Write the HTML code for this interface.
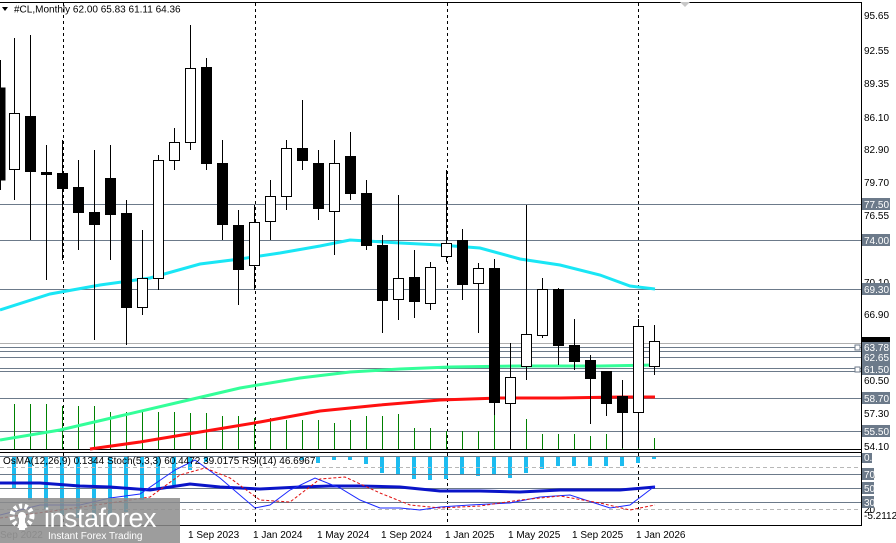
<!DOCTYPE html>
<html><head><meta charset="utf-8"><style>
html,body{margin:0;padding:0;background:#fff;width:896px;height:543px;overflow:hidden}
svg{display:block;font-family:"Liberation Sans",sans-serif}
</style></head><body>
<svg width="896" height="543" viewBox="0 0 896 543" xmlns="http://www.w3.org/2000/svg">
<rect width="896" height="543" fill="#fff"/>
<line x1="0" y1="2.5" x2="861" y2="2.5" stroke="#000"/>
<line x1="861.5" y1="2" x2="861.5" y2="526" stroke="#000"/>
<line x1="0" y1="449.5" x2="861" y2="449.5" stroke="#000"/>
<line x1="0" y1="452.5" x2="861" y2="452.5" stroke="#000"/>
<line x1="0" y1="525.5" x2="861" y2="525.5" stroke="#000"/>
<polygon points="680,2 690,2 685,7" fill="#c8c8c8"/>
<g stroke="#000" stroke-dasharray="3,3">
<line x1="63.5" y1="3" x2="63.5" y2="525"/>
<line x1="255.5" y1="3" x2="255.5" y2="525"/>
<line x1="447.5" y1="3" x2="447.5" y2="525"/>
<line x1="638.5" y1="3" x2="638.5" y2="525"/>
</g>
<g stroke="#6c7a8a">
<line x1="0" y1="204.5" x2="861" y2="204.5"/>
<line x1="0" y1="240.5" x2="861" y2="240.5"/>
<line x1="0" y1="289.5" x2="861" y2="289.5"/>
<line x1="0" y1="347.5" x2="861" y2="347.5"/>
<line x1="0" y1="351.5" x2="861" y2="351.5"/>
<line x1="0" y1="357.5" x2="861" y2="357.5"/>
<line x1="0" y1="368.5" x2="861" y2="368.5"/>
<line x1="0" y1="371.5" x2="861" y2="371.5"/>
<line x1="0" y1="398.5" x2="861" y2="398.5"/>
<line x1="0" y1="431.5" x2="861" y2="431.5"/>
</g>
<line x1="0" y1="343.5" x2="861" y2="343.5" stroke="#b0b0b0"/>
<rect x="855" y="345" width="5" height="5" fill="#fff" stroke="#6c7a8a"/>
<rect x="855" y="367" width="5" height="5" fill="#fff" stroke="#6c7a8a"/>
<g stroke="#008000">
<line x1="14.5" y1="404" x2="14.5" y2="449"/><line x1="30.5" y1="404" x2="30.5" y2="449"/><line x1="46.5" y1="404" x2="46.5" y2="449"/><line x1="62.5" y1="406" x2="62.5" y2="449"/><line x1="78.5" y1="406" x2="78.5" y2="449"/><line x1="94.5" y1="406" x2="94.5" y2="449"/><line x1="110.5" y1="412" x2="110.5" y2="449"/><line x1="126.5" y1="412" x2="126.5" y2="449"/><line x1="142.5" y1="412" x2="142.5" y2="449"/><line x1="158.5" y1="412" x2="158.5" y2="449"/><line x1="174.5" y1="412" x2="174.5" y2="449"/><line x1="190.5" y1="413" x2="190.5" y2="449"/><line x1="206.5" y1="413" x2="206.5" y2="449"/><line x1="222.5" y1="416" x2="222.5" y2="449"/><line x1="238.5" y1="416" x2="238.5" y2="449"/><line x1="254.5" y1="418" x2="254.5" y2="449"/><line x1="270.5" y1="418" x2="270.5" y2="449"/><line x1="286.5" y1="420" x2="286.5" y2="449"/><line x1="302.5" y1="420" x2="302.5" y2="449"/><line x1="318.5" y1="420" x2="318.5" y2="449"/><line x1="334.5" y1="423" x2="334.5" y2="449"/><line x1="350.5" y1="420" x2="350.5" y2="449"/><line x1="366.5" y1="416" x2="366.5" y2="449"/><line x1="382.5" y1="416" x2="382.5" y2="449"/><line x1="398.5" y1="414" x2="398.5" y2="449"/><line x1="414.5" y1="428" x2="414.5" y2="449"/><line x1="430.5" y1="428" x2="430.5" y2="449"/><line x1="446.5" y1="431" x2="446.5" y2="449"/><line x1="462.5" y1="431" x2="462.5" y2="449"/><line x1="478.5" y1="431" x2="478.5" y2="449"/><line x1="494.5" y1="415" x2="494.5" y2="449"/><line x1="510.5" y1="428" x2="510.5" y2="449"/><line x1="526.5" y1="419" x2="526.5" y2="449"/><line x1="542.5" y1="434" x2="542.5" y2="449"/><line x1="558.5" y1="434" x2="558.5" y2="449"/><line x1="574.5" y1="434" x2="574.5" y2="449"/><line x1="590.5" y1="436" x2="590.5" y2="449"/><line x1="606.5" y1="434" x2="606.5" y2="449"/><line x1="622.5" y1="437" x2="622.5" y2="449"/><line x1="638.5" y1="428" x2="638.5" y2="449"/><line x1="654.5" y1="438" x2="654.5" y2="449"/>
</g>
<polyline fill="none" stroke="#33ff99" stroke-width="3" points="0,440 60,430 120,416 180,402 240,388 300,378 350,372 400,369 450,367 520,366 600,366 655,365"/>
<polyline fill="none" stroke="#ff1010" stroke-width="3" points="90,449 140,442 200,432 260,422 320,411 380,405 440,400 500,398 560,398 620,397 655,397"/>
<polyline fill="none" stroke="#19e6f5" stroke-width="3" points="0,310 50,294 100,285 150,278 200,264 240,259 280,253 320,246 350,240 400,243 440,245 480,248 520,259 560,265 600,275 630,286 655,289"/>
<g stroke="#000" stroke-width="1">
<line x1="0.5" y1="60" x2="0.5" y2="190"/><rect x="-5" y="88" width="10" height="92" fill="#000"/>
<line x1="14.5" y1="38" x2="14.5" y2="200"/><rect x="9.5" y="113.5" width="10" height="56" fill="#fff"/>
<line x1="30.5" y1="35" x2="30.5" y2="240"/><rect x="25.5" y="116.5" width="10" height="55" fill="#000"/>
<line x1="46.5" y1="145" x2="46.5" y2="280"/><rect x="41.5" y="172.5" width="10" height="2" fill="#000"/>
<line x1="62.5" y1="140" x2="62.5" y2="260"/><rect x="57.5" y="173.5" width="10" height="15" fill="#000"/>
<line x1="78.5" y1="160" x2="78.5" y2="250"/><rect x="73.5" y="187.5" width="10" height="25" fill="#000"/>
<line x1="94.5" y1="150" x2="94.5" y2="340"/><rect x="89.5" y="212.5" width="10" height="12" fill="#000"/>
<line x1="110.5" y1="145" x2="110.5" y2="260"/><rect x="105.5" y="178.5" width="10" height="36" fill="#000"/>
<line x1="126.5" y1="200" x2="126.5" y2="345"/><rect x="121.5" y="213.5" width="10" height="94" fill="#000"/>
<line x1="142.5" y1="230" x2="142.5" y2="315"/><rect x="137.5" y="278.5" width="10" height="29" fill="#fff"/>
<line x1="158.5" y1="155" x2="158.5" y2="290"/><rect x="153.5" y="160.5" width="10" height="118" fill="#fff"/>
<line x1="174.5" y1="128" x2="174.5" y2="170"/><rect x="169.5" y="142.5" width="10" height="18" fill="#fff"/>
<line x1="190.5" y1="25" x2="190.5" y2="150"/><rect x="185.5" y="68.5" width="10" height="74" fill="#fff"/>
<line x1="206.5" y1="58" x2="206.5" y2="170"/><rect x="201.5" y="67.5" width="10" height="96" fill="#000"/>
<line x1="222.5" y1="140" x2="222.5" y2="240"/><rect x="217.5" y="163.5" width="10" height="61" fill="#000"/>
<line x1="238.5" y1="210" x2="238.5" y2="305"/><rect x="233.5" y="225.5" width="10" height="44" fill="#000"/>
<line x1="254.5" y1="205" x2="254.5" y2="290"/><rect x="249.5" y="222.5" width="10" height="43" fill="#fff"/>
<line x1="270.5" y1="180" x2="270.5" y2="240"/><rect x="265.5" y="196.5" width="10" height="25" fill="#fff"/>
<line x1="286.5" y1="140" x2="286.5" y2="210"/><rect x="281.5" y="148.5" width="10" height="48" fill="#fff"/>
<line x1="302.5" y1="100" x2="302.5" y2="170"/><rect x="297.5" y="148.5" width="10" height="12" fill="#000"/>
<line x1="318.5" y1="150" x2="318.5" y2="220"/><rect x="313.5" y="163.5" width="10" height="45" fill="#000"/>
<line x1="334.5" y1="140" x2="334.5" y2="255"/><rect x="329.5" y="163.5" width="10" height="48" fill="#fff"/>
<line x1="350.5" y1="132" x2="350.5" y2="200"/><rect x="345.5" y="156.5" width="10" height="37" fill="#000"/>
<line x1="366.5" y1="180" x2="366.5" y2="250"/><rect x="361.5" y="193.5" width="10" height="52" fill="#000"/>
<line x1="382.5" y1="235" x2="382.5" y2="333"/><rect x="377.5" y="245.5" width="10" height="55" fill="#000"/>
<line x1="398.5" y1="195" x2="398.5" y2="320"/><rect x="393.5" y="278.5" width="10" height="21" fill="#fff"/>
<line x1="414.5" y1="250" x2="414.5" y2="318"/><rect x="409.5" y="277.5" width="10" height="24" fill="#000"/>
<line x1="430.5" y1="262" x2="430.5" y2="310"/><rect x="425.5" y="267.5" width="10" height="36" fill="#fff"/>
<line x1="446.5" y1="170" x2="446.5" y2="262"/><rect x="441.5" y="243.5" width="10" height="13" fill="#fff"/>
<line x1="462.5" y1="229" x2="462.5" y2="300"/><rect x="457.5" y="240.5" width="10" height="44" fill="#000"/>
<line x1="478.5" y1="263" x2="478.5" y2="333"/><rect x="473.5" y="268.5" width="10" height="15" fill="#fff"/>
<line x1="494.5" y1="259" x2="494.5" y2="415"/><rect x="489.5" y="268.5" width="10" height="134" fill="#000"/>
<line x1="510.5" y1="343" x2="510.5" y2="450"/><rect x="505.5" y="377.5" width="10" height="26" fill="#fff"/>
<line x1="526.5" y1="205" x2="526.5" y2="380"/><rect x="521.5" y="334.5" width="10" height="32" fill="#fff"/>
<line x1="542.5" y1="278" x2="542.5" y2="338"/><rect x="537.5" y="289.5" width="10" height="46" fill="#fff"/>
<line x1="558.5" y1="288" x2="558.5" y2="365"/><rect x="553.5" y="289.5" width="10" height="56" fill="#000"/>
<line x1="574.5" y1="319" x2="574.5" y2="370"/><rect x="569.5" y="345.5" width="10" height="16" fill="#000"/>
<line x1="590.5" y1="355" x2="590.5" y2="424"/><rect x="585.5" y="360.5" width="10" height="18" fill="#000"/>
<line x1="606.5" y1="371" x2="606.5" y2="416"/><rect x="601.5" y="371.5" width="10" height="32" fill="#000"/>
<line x1="622.5" y1="380" x2="622.5" y2="448"/><rect x="617.5" y="396.5" width="10" height="16" fill="#000"/>
<line x1="638.5" y1="319" x2="638.5" y2="448"/><rect x="633.5" y="326.5" width="10" height="86" fill="#fff"/>
<line x1="654.5" y1="325" x2="654.5" y2="375"/><rect x="649.5" y="341.5" width="10" height="25" fill="#fff"/>
</g>
<g stroke="#1cbcf0" stroke-width="4">
<line x1="14" y1="457" x2="14" y2="488"/><line x1="30" y1="457" x2="30" y2="500"/><line x1="46" y1="457" x2="46" y2="510"/><line x1="62" y1="457" x2="62" y2="515"/><line x1="78" y1="457" x2="78" y2="518"/><line x1="94" y1="457" x2="94" y2="520"/><line x1="110" y1="457" x2="110" y2="515"/><line x1="126" y1="457" x2="126" y2="512"/><line x1="142" y1="457" x2="142" y2="500"/><line x1="158" y1="457" x2="158" y2="490"/><line x1="174" y1="457" x2="174" y2="485"/><line x1="190" y1="457" x2="190" y2="470"/><line x1="206" y1="457" x2="206" y2="462"/><line x1="302" y1="457" x2="302" y2="460"/><line x1="318" y1="457" x2="318" y2="463"/><line x1="334" y1="457" x2="334" y2="460"/><line x1="350" y1="457" x2="350" y2="460"/><line x1="366" y1="457" x2="366" y2="464"/><line x1="382" y1="457" x2="382" y2="473"/><line x1="398" y1="457" x2="398" y2="475"/><line x1="414" y1="457" x2="414" y2="479"/><line x1="430" y1="457" x2="430" y2="480"/><line x1="446" y1="457" x2="446" y2="479"/><line x1="462" y1="457" x2="462" y2="475"/><line x1="478" y1="457" x2="478" y2="476"/><line x1="494" y1="457" x2="494" y2="475"/><line x1="510" y1="457" x2="510" y2="478"/><line x1="526" y1="457" x2="526" y2="473"/><line x1="542" y1="457" x2="542" y2="469"/><line x1="558" y1="457" x2="558" y2="466"/><line x1="574" y1="457" x2="574" y2="466"/><line x1="590" y1="457" x2="590" y2="466"/><line x1="606" y1="457" x2="606" y2="466"/><line x1="622" y1="457" x2="622" y2="466"/><line x1="638" y1="457" x2="638" y2="463"/><line x1="654" y1="457" x2="654" y2="459"/>
</g>
<g stroke="#6c7a8a"><line x1="0" y1="456.5" x2="861" y2="456.5"/><line x1="0" y1="474.5" x2="861" y2="474.5"/><line x1="0" y1="488.5" x2="861" y2="488.5"/><line x1="0" y1="502.5" x2="861" y2="502.5"/></g>
<g stroke="#b8b8b8" stroke-dasharray="4,3"><line x1="0" y1="467.5" x2="861" y2="467.5"/><line x1="0" y1="509.5" x2="861" y2="509.5"/></g>
<polyline fill="none" stroke="#0a14c8" stroke-width="3" points="0,483 40,483 80,486 110,487 150,490 170,487 190,484 220,487 260,489 300,487 330,486 360,486 400,487 440,491 480,491 520,492 560,490 620,490 655,487"/>
<polyline fill="none" stroke="#1a28ff" stroke-width="1" points="0,515 40,505 80,505 110,498 140,494 175,470 195,460 220,478 255,508 270,505 290,490 315,478 340,488 360,500 380,508 400,508 420,510 440,507 470,505 510,503 540,497 570,495 610,508 630,505 655,486"/>
<polyline fill="none" stroke="#e01010" stroke-width="1" stroke-dasharray="3,2" points="0,518 60,510 110,503 150,497 180,475 205,468 230,478 260,500 290,502 320,479 345,477 380,493 410,505 440,508 480,506 520,500 560,496 600,503 630,510 655,505"/>
<text x="3" y="464" font-size="10" fill="#000">OsMA(12,26,9) 0.1344  Stoch(5,3,3) 60.4472 39.0175  RSI(14) 46.6967</text>
<polygon points="2,7 8,7 5,11" fill="#000"/>
<text x="14" y="12.5" font-size="10" fill="#000">#CL,Monthly  62.00 65.83 61.11 64.36</text>
<g font-size="10" fill="#000">
<text x="864" y="19">95.65</text><text x="864" y="54">92.55</text><text x="864" y="87">89.35</text><text x="864" y="121">86.10</text><text x="864" y="153">82.90</text><text x="864" y="186">79.70</text><text x="864" y="219">76.55</text><text x="864" y="286">70.10</text><text x="864" y="318">66.90</text><text x="864" y="384">60.50</text><text x="864" y="417">57.30</text><text x="864" y="450">54.10</text>
<text x="864" y="479">80</text><text x="864" y="513">20</text><text x="864" y="519">-5.2112</text>
</g>
<g fill="#6c7a8a">
<rect x="862" y="198" width="28" height="12"/><rect x="862" y="234" width="28" height="12"/><rect x="862" y="283" width="28" height="12"/><rect x="862" y="337" width="28" height="8" fill="#000"/><rect x="862" y="342" width="28" height="11"/><rect x="862" y="351" width="28" height="12"/><rect x="862" y="363" width="28" height="12"/><rect x="862" y="392" width="28" height="12"/><rect x="862" y="425" width="28" height="12"/>
<rect x="862" y="453" width="10" height="10"/><rect x="862" y="468" width="12" height="12"/><rect x="862" y="482" width="12" height="12"/><rect x="862" y="496" width="12" height="12"/>
</g>
<g font-size="10" fill="#fff">
<text x="864" y="208">77.50</text><text x="864" y="244">74.00</text><text x="864" y="293">69.30</text><text x="864" y="351">63.78</text><text x="864" y="361">62.65</text><text x="864" y="373">61.50</text><text x="864" y="402">58.70</text><text x="864" y="435">55.50</text>
<text x="864" y="461">0.38</text><text x="864" y="478">70</text><text x="864" y="492">50</text><text x="864" y="506">30</text>
</g>
<g font-size="10" fill="#000">
<text x="188" y="538">1 Sep 2023</text><text x="253" y="538">1 Jan 2024</text><text x="317" y="538">1 May 2024</text><text x="381" y="538">1 Sep 2024</text><text x="445" y="538">1 Jan 2025</text><text x="508" y="538">1 May 2025</text><text x="572" y="538">1 Sep 2025</text><text x="636" y="538">1 Jan 2026</text>
<text x="0" y="538" fill="#888">Sep 2022</text>
</g>
<rect x="0" y="498" width="180" height="45" fill="#8c8c8c" opacity="0.85"/>
<circle cx="22" cy="516" r="10" fill="none" stroke="#fff" stroke-width="5" stroke-dasharray="3,2.5"/>
<circle cx="22" cy="516" r="4" fill="#fff"/>
<rect x="19" y="518" width="6" height="12" fill="#fff"/>
<text x="44" y="527" font-size="27" fill="#fff" letter-spacing="-0.5">instaforex</text>
<text x="48" y="539" font-size="10" fill="#fff">Instant Forex Trading</text>
</svg>
</body></html>
